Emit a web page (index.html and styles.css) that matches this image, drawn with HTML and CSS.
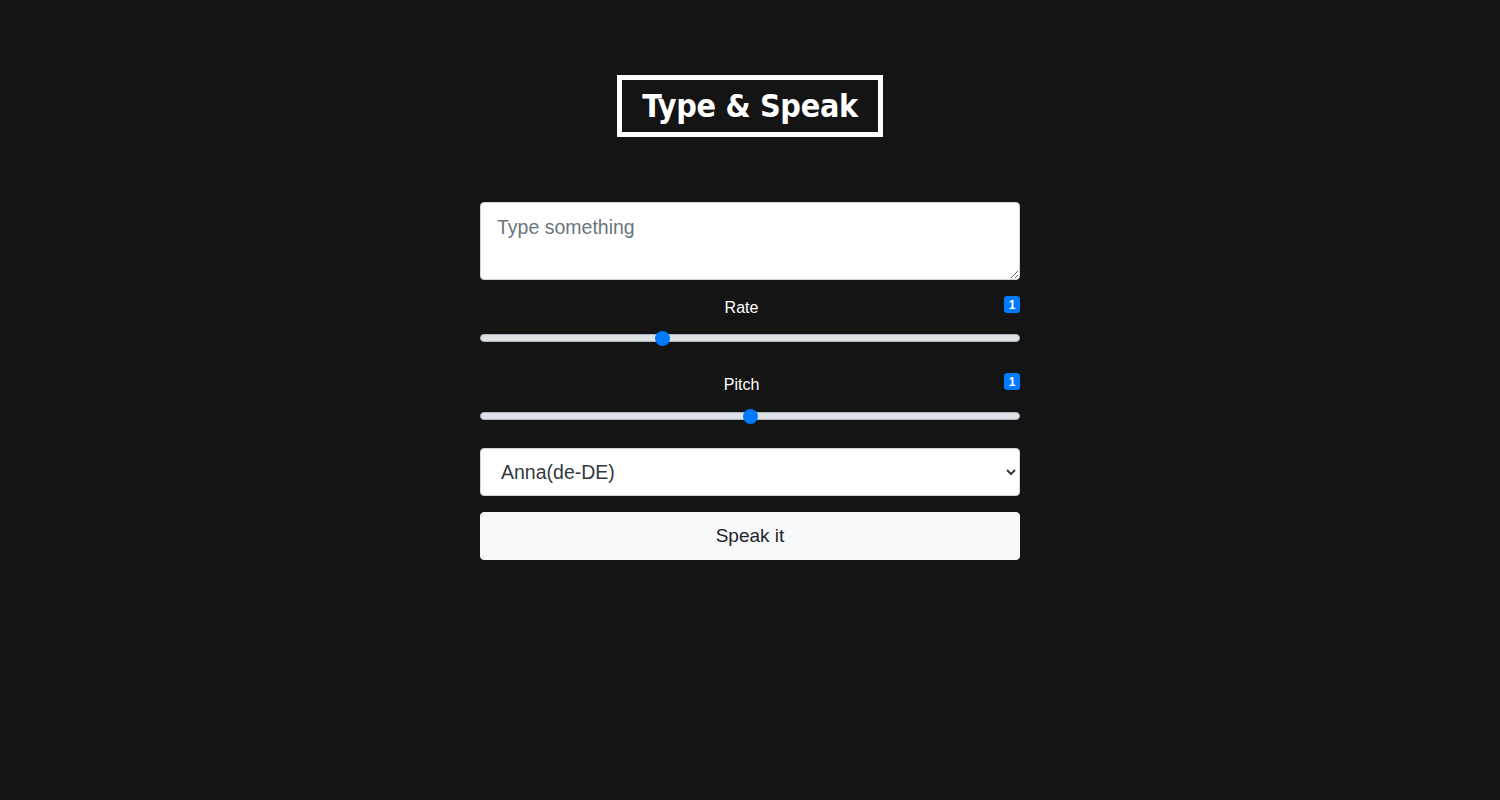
FILE: index.html
```html
<!DOCTYPE html>
<html>
<head>
<meta charset="utf-8">
<title>Type & Speak</title>
<link rel="stylesheet" href="styles.css">
</head>
<body>
<div class="page">
  <header class="header">
    <h1 class="logo">Type &amp; Speak</h1>
  </header>
  <form class="form">
    <textarea class="text-input" placeholder="Type something"></textarea>
    <div class="field">
      <div class="label-row"><label class="label">Rate</label><span class="badge">1</span></div>
      <input class="range" type="range" min="0.5" max="2" step="0.1" value="1">
    </div>
    <div class="field">
      <div class="label-row"><label class="label">Pitch</label><span class="badge">1</span></div>
      <input class="range" type="range" min="0" max="2" step="0.1" value="1">
    </div>
    <select class="select">
      <option>Anna(de-DE)</option>
    </select>
    <button type="button" class="btn">Speak it</button>
  </form>
</div>
</body>
</html>
```
FILE: styles.css
```css
* { box-sizing: border-box; }
html, body { margin: 0; padding: 0; }
body {
  background: #141414;
  color: #fff;
  font-family: "Liberation Sans", Arial, sans-serif;
  width: 1500px;
  height: 800px;
}
.page {
  display: flex;
  flex-direction: column;
  align-items: center;
  padding-top: 75px;
}
.header { display: flex; justify-content: center; }
.logo {
  margin: 0;
  border: 5px solid #fff;
  padding: 0 20px;
  height: 62px;
  display: flex;
  align-items: center;
  font-family: "DejaVu Sans Condensed", "DejaVu Sans", sans-serif;
  font-stretch: condensed;
  font-weight: 700;
  font-size: 32px;
  letter-spacing: -0.3px;
  color: #fff;
}
.form {
  margin-top: 65px;
  width: 540px;
  display: flex;
  flex-direction: column;
}
.text-input {
  width: 540px;
  height: 78px;
  border: 1px solid #ced4da;
  border-radius: 4px;
  padding: 13px 16px;
  font-family: "Liberation Sans", Arial, sans-serif;
  font-size: 19.5px;
  resize: vertical;
  background: #fff;
  color: #495057;
  display: block;
}
.text-input::placeholder { color: #6c757d; }
.field { display: flex; flex-direction: column; }
.label-row {
  position: relative;
  height: 40px;
  display: flex;
  align-items: flex-end;
  justify-content: center;
  padding-bottom: 3px;
}
.field + .field .label-row { height: 52px; padding-bottom: 4px; }
.label {
  font-size: 16px;
  font-weight: 500;
  color: #fff;
  margin-left: -17px;
}
.badge {
  position: absolute;
  right: 0;
  top: 16px;
  width: 16px;
  height: 17px;
  background: #007bff;
  border-radius: 3px;
  color: #fff;
  font-size: 12px;
  font-weight: 700;
  display: flex;
  align-items: center;
  justify-content: center;
}
.field + .field .badge { top: 27px; }
.range {
  -webkit-appearance: none;
  appearance: none;
  width: 540px;
  height: 16px;
  margin: 10px 0 0;
  background: transparent;
  display: block;
}
.range::-webkit-slider-runnable-track {
  height: 8px;
  background: #dee2e6;
  border: 1px solid #adb5bd;
  border-radius: 4px;
}
.range::-webkit-slider-thumb {
  -webkit-appearance: none;
  width: 15px;
  height: 15px;
  border-radius: 50%;
  background: #007bff;
  border: none;
  margin-top: -4.5px;
}
.select {
  margin-top: 24px;
  width: 540px;
  height: 48px;
  border: 1px solid #ced4da;
  border-radius: 4px;
  padding: 0 16px;
  font-family: "Liberation Sans", Arial, sans-serif;
  font-size: 19.5px;
  color: #343a40;
  background: #fff;
}
.btn {
  margin-top: 16px;
  width: 540px;
  height: 48px;
  border: 1px solid #f8f9fa;
  border-radius: 4px;
  background: #f8f9fa;
  color: #212529;
  font-family: "Liberation Sans", Arial, sans-serif;
  font-size: 19px;
}
```
